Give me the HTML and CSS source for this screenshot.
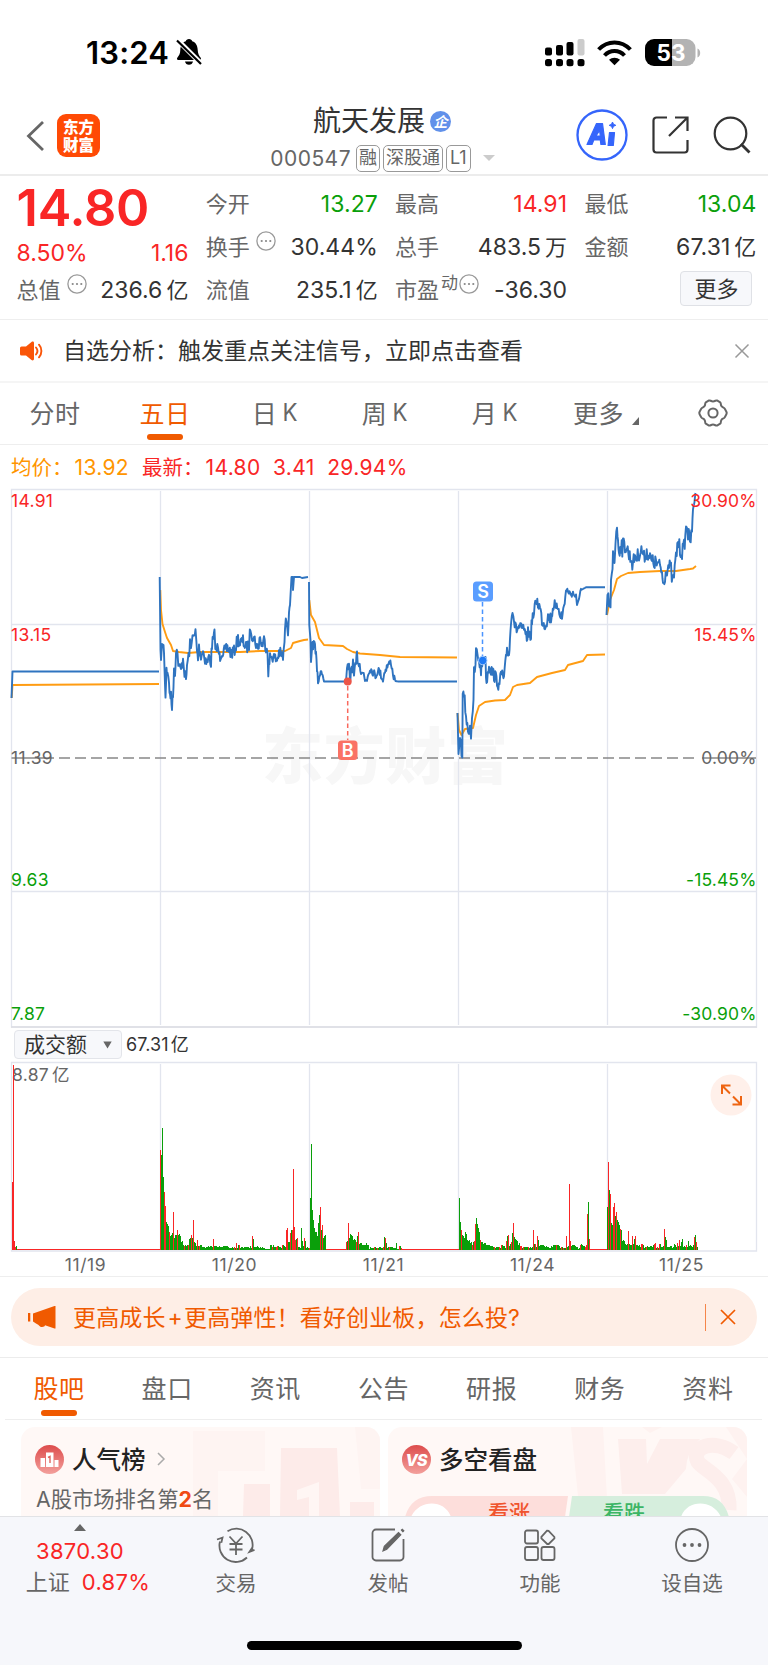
FILE: index.html
```html
<!DOCTYPE html>
<html lang="zh-CN">
<head>
<meta charset="utf-8">
<title>航天发展 000547</title>
<link rel="stylesheet" href="styles.css">
</head>
<body>
<div class="screen">
  <header class="status">
    <span class="time">13:24</span>
    <svg class="bell" width="26" height="28" viewBox="0 0 26 28"><path d="M13 1c1.800 0 2.800 1 3.200 2.200 4 1.300 5.300 4.800 5.500 8.800.2 4 1.300 5.600 3 7.700.6.800.2 2.300-1 2.300H2.300c-1.300 0-1.700-1.400-1-2.300 1.800-2.200 2.900-3.800 3-7.700.200-4 1.600-7.500 5.500-8.800C10.200 2 11.200 1 13 1zM9 23.500h8c-.3 2-2 3.300-4 3.300s-3.700-1.300-4-3.300z"/><path d="M1.500 2 25.500 26" stroke="#fff" stroke-width="5"/><path d="M1 2.500 25 26" stroke="#000" stroke-width="2.200"/></svg>
    <svg class="signal" width="160" height="30" viewBox="544 36 160 30">
      <g><rect x="545" y="46.500" width="7" height="8" rx="2"/><rect x="556" y="44" width="7" height="10.500" rx="2"/><rect x="566.500" y="41" width="7" height="13.500" rx="2"/><rect x="577.500" y="38" width="7" height="16.500" rx="2" fill="#ccc"/><rect x="545" y="58" width="7" height="7.200" rx="2.500"/><rect x="556" y="58" width="7" height="7.200" rx="2.500"/><rect x="566.500" y="58" width="7" height="7.200" rx="2.500"/><rect x="577.500" y="58" width="7" height="7.200" rx="2.500"/></g>
      <path d="M598.600 48.500C607.500 39 621.500 39 630.400 48.500M604.500 54.500C610 48.600 619 48.600 624.500 54.500" fill="none" stroke="#000" stroke-width="4"/><path d="M609 58.700C612 56 617 56 620 58.700L614.500 64.200z"/>
      <path d="M672 38h14.500a9 9 0 0 1 9 9v9a9 9 0 0 1-9 9H672z" fill="#b3b3b3"/><path d="M672 38h-18a9 9 0 0 0-9 9v9a9 9 0 0 0 9 9h18z"/><path d="M697.500 47.500c3.600 1.500 3.600 7.500 0 9z" fill="#b3b3b3"/>
      <text x="671" y="60" text-anchor="middle" class="batt">53</text>
    </svg>
  </header>

  <nav class="nav">
    <div class="nav-side">
      <svg width="20" height="34" viewBox="0 0 20 34"><path d="M18 3 3.500 17 18 31" fill="none" stroke="#666" stroke-width="2.800"/></svg>
      <div class="brand"><span>东方</span><span>财富</span></div>
    </div>
    <div class="title">
      <div class="name">航天发展<span class="ent">企</span></div>
      <div class="code"><span class="num">000547</span><i class="tag">融</i><i class="tag">深股通</i><i class="tag">L1</i><svg width="12" height="8" viewBox="0 0 12 8"><path d="M0 1h12L6 7z" fill="#ccc"/></svg></div>
    </div>
    <div class="nav-side right">
      <svg width="52" height="52" viewBox="0 0 52 52"><circle cx="26" cy="26" r="24.500" fill="none" stroke="#3565fb" stroke-width="2.300"/><path d="M20.500 14.500h6l2.800 21h-4.400l-.6-4.500h-6.500l-1.800 4.500h-5zM20 27h4.300l-.7-5.500zM33.500 23.500h5l-1.200 13h-5.200z" fill="#3565fb" stroke="#3565fb" stroke-width="1.200" stroke-linejoin="round"/><path d="m36.500 13 1 2.300 2.300 1-2.300 1-1 2.300-1-2.300-2.300-1 2.300-1z" fill="#3565fb" stroke="#3565fb"/></svg>
      <svg width="37" height="38" viewBox="0 0 37 38"><path d="M15 1.500H4.500a3 3 0 0 0-3 3v29a3 3 0 0 0 3 3h28a3 3 0 0 0 3-3V24M23 1.500h12.500V15M35 2 17 20" fill="none" stroke="#333" stroke-width="2.200"/></svg>
      <svg width="38" height="38" viewBox="0 0 38 38"><circle cx="17.500" cy="17.500" r="15.800" fill="none" stroke="#333" stroke-width="2.200"/><path d="m28 28 8.500 8.500" stroke="#333" stroke-width="2.800"/></svg>
    </div>
  </nav>

  <section class="quote">
    <div class="col first">
      <div class="price">14.80</div>
      <div class="row red change"><span>8.50%</span><span>1.16</span></div>
      <div class="row"><label>总值<svg class="dots" viewBox="0 0 20 20"><use href="#dots"/></svg></label><b>236.6<u>亿</u></b></div>
    </div>
    <div class="col">
      <div class="row"><label>今开</label><b class="green">13.27</b></div>
      <div class="row"><label>换手<svg class="dots" viewBox="0 0 20 20"><use href="#dots"/></svg></label><b>30.44%</b></div>
      <div class="row"><label>流值</label><b>235.1<u>亿</u></b></div>
    </div>
    <div class="col">
      <div class="row"><label>最高</label><b class="red">14.91</b></div>
      <div class="row"><label>总手</label><b>483.5<u>万</u></b></div>
      <div class="row"><label>市盈<sup>动</sup><svg class="dots tight" viewBox="0 0 20 20"><g id="dots"><circle cx="10" cy="10" r="9.100" fill="none" stroke="#999" stroke-width="1.300"/><circle cx="5.700" cy="10" r="1.100" fill="#888"/><circle cx="10" cy="10" r="1.100" fill="#888"/><circle cx="14.300" cy="10" r="1.100" fill="#888"/></g></svg></label><b>-36.30</b></div>
    </div>
    <div class="col">
      <div class="row"><label>最低</label><b class="green">13.04</b></div>
      <div class="row"><label>金额</label><b>67.31<u>亿</u></b></div>
      <div class="row end"><button class="more">更多</button></div>
    </div>
  </section>

  <section class="notice">
    <svg width="24" height="20" viewBox="0 0 24 20"><path d="M1.500 5.500H6L11.500 1c1-.8 2.500-.3 2.500 1v16c0 1.300-1.500 1.800-2.500 1L6 14.500H1.500A1.500 1.500 0 0 1 0 13V7a1.500 1.500 0 0 1 1.500-1.500z" fill="#fa5508"/><path d="M16 6.500c1.700 2 1.700 5 0 7M19 3.700c3.200 3.500 3.200 9 0 12.600" fill="none" stroke="#fa5508" stroke-width="1.900" stroke-linecap="round"/></svg>
    <span>自选分析：触发重点关注信号，立即点击查看</span>
    <svg width="16" height="16" viewBox="0 0 16 16"><path d="m1.500 1.500 13 13m0-13-13 13" stroke="#999" stroke-width="1.500"/></svg>
  </section>

  <section class="tabs period">
    <span>分时</span><span class="on">五日</span><span>日<em>K</em></span><span>周<em>K</em></span><span>月<em>K</em></span><span class="wide">更多<svg width="7" height="8" viewBox="0 0 7 8"><path d="M7 0v8H0z" fill="#666"/></svg></span>
    <span><svg width="30" height="30" viewBox="0 0 30 30" fill="none" stroke="#666" stroke-width="2"><path d="M11 2.500c1-.5 2 .9 4 .9s3-1.400 4-.9l3.200 1.900c1 .7.200 2 1.200 3.700s2.800 1.400 3.300 2.500c.5 1.200 2 3.200 2 4.400s-1.500 3.200-2 4.400c-.5 1.100-2.300.8-3.300 2.500s-.2 3-1.200 3.700L19 27.500c-1 .5-2-.9-4-.9s-3 1.400-4 .9l-3.200-1.900c-1-.7-.2-2-1.200-3.700s-2.800-1.400-3.300-2.500c-.5-1.200-2-3.200-2-4.400s1.500-3.200 2-4.400c.5-1.100 2.300-.8 3.300-2.500s.2-3 1.200-3.700z"/><circle cx="15" cy="15" r="4.600"/></svg></span>
  </section>

  <section class="legend"><span class="orange">均价：<b>13.92</b></span><span class="red">最新：<b>14.80</b><b>3.41</b><b>29.94%</b></span></section>

  <svg class="chart" width="768" height="540" viewBox="0 488 768 540">
    <text x="262" y="779" class="mark" textLength="246">东方财富</text>
    <g class="grid"><path d="M160.500 491v534M309.500 491v534M458.500 491v534M607.500 491v534M11.500 624.500h745M11.500 891.500h745"/><path d="M11.500 489.500h745v537.500h-745z"/><path d="M11 1027h746" class="strong"/></g>
    <path class="dash" d="M59 758H698"/><path class="dash0" d="M11.500 758H54M702 758h54"/>
    <g id="avg" class="avg"></g><g id="last" class="last"></g>
    <path d="M482.500 602V656" class="sell"/><circle cx="482.700" cy="660.500" r="4.200" fill="#1f7af5" stroke="#a5cbff"/><rect x="473" y="581.500" width="20" height="20" rx="3.500" fill="#5a9dff"/><text x="483" y="598" class="bs">S</text>
    <path d="M347.700 686V740" class="buy"/><circle cx="347.700" cy="681.500" r="4" fill="#ec5548"/><rect x="338" y="740.500" width="19.500" height="19.500" rx="3.500" fill="#fa7265"/><text x="347.800" y="757" class="bs">B</text>
    <g class="axis">
      <text x="11" y="507" class="r">14.91</text><text x="11" y="641" class="r">13.15</text><text x="11" y="763.500" class="n">11.39</text><text x="11" y="886" class="g">9.63</text><text x="11" y="1020" class="g">7.87</text>
      <text x="756.500" y="507" class="r e">30.90%</text><text x="756.500" y="641" class="r e">15.45%</text><text x="756.500" y="763.500" class="n e">0.00%</text><text x="756.500" y="886" class="g e">-15.45%</text><text x="756.500" y="1020" class="g e">-30.90%</text>
    </g>
  </svg>

  <section class="indicator"><button>成交额<svg width="9" height="8" viewBox="0 0 9 8"><path d="M.3.500h8.400L4.500 7.500z" fill="#666"/></svg></button><span>67.31<u>亿</u></span></section>

  <svg class="volume" width="768" height="192" viewBox="0 1061 768 192">
    <g class="grid"><path d="M160.500 1064v186M309.500 1064v186M458.500 1064v186M607.500 1064v186"/><path d="M11.500 1062.500h745V1251h-745z"/></g>
    <text x="12" y="1081" class="vmax">8.87<tspan dx="3">亿</tspan></text>
    <g id="vol" shape-rendering="crispEdges"></g>
    <circle cx="731" cy="1095" r="20.500" fill="#fff0ea"/><path d="M722 1094v-8.500h8.500M722 1085.500l8 8M732.500 1104.500h8.500V1096M741 1104.500l-8-8" fill="none" stroke="#ee6412" stroke-width="2"/>
  </svg>
  <section class="dates"><span>11/19</span><span>11/20</span><span>11/21</span><span>11/24</span><span>11/25</span></section>

  <section class="promo-wrap"><div class="promo">
    <svg width="28" height="24" viewBox="0 0 28 24" fill="#f05a00"><path d="M0 8h2.300v8.500H0zM5 8.500 26.500 1h1v22.500h-1L17 20.300c0 1.500-3.500 2.600-5.200.9l-1.600-1.500L8 18.500 5 16.500z"/></svg>
    <span>更高成长<em>+</em>更高弹性！看好创业板，怎么投?</span><i></i>
    <svg width="16" height="16" viewBox="0 0 16 16"><path d="m1 1 14 14m0-14L1 15" stroke="#f05a00" stroke-width="1.700"/></svg>
  </div></section>

  <section class="tabs info"><span class="on">股吧</span><span>盘口</span><span>资讯</span><span>公告</span><span>研报</span><span>财务</span><span>资料</span></section>

  <section class="cards">
    <div class="card">
      <svg class="art" width="359" height="89" viewBox="0 0 359 89"><path d="M172 4h72v40h-47v45h-25zM334 0h25v62h-19z" fill="#fef4f2"/><path d="M223 57h26v32h-27zM260 21h56l3 68h-60zM329 75h24v14h-24z" fill="#fdebe9"/><path d="M276 63l22-8v34h-10V70l-12 3z" fill="#fff6f4"/></svg>
      <div class="head"><svg width="29" height="29" viewBox="0 0 29 29"><defs><linearGradient id="badge" x2="0" y2="1"><stop stop-color="#dd4c4c"/><stop offset="1" stop-color="#f3a09c"/></linearGradient></defs><circle cx="14.500" cy="14.500" r="14.500" fill="url(#badge)"/><path d="M5.500 13H10v9H5.500zM11 7.500h7.500V22H11zM19.500 15h4v7h-4z" fill="#fff"/><path d="m13 12.500 2-1V18" fill="none" stroke="#df6660" stroke-width="1.400"/></svg><strong>人气榜</strong><svg width="9" height="14" viewBox="0 0 9 14"><path d="m1 1 6 6-6 6" fill="none" stroke="#aaa" stroke-width="1.500"/></svg></div>
      <p>A股市场排名第<b>2</b>名</p>
    </div>
    <div class="card">
      <svg class="art" width="359" height="89" viewBox="0 0 359 89"><path d="M183 0h32l5 89h-28zM254 0h20l-12 6zM338 0h21v70l-15-18 15-20z" fill="#fef2f0"/><path d="M230 12h28l1 25 13-25h40q-14 14-14 30l-21 25h-43z" fill="#fdeeec"/><path d="M346 26c-20-15-44-6-36 9 5 8 33 16 31 48" fill="none" stroke="#fdeeec" stroke-width="15"/></svg>
      <div class="head"><svg width="29" height="29" viewBox="0 0 29 29"><circle cx="14.500" cy="14.500" r="14.500" fill="url(#badge)"/><text x="14" y="20.500" class="vs">VS</text></svg><strong>多空看盘</strong></div>
      <svg class="vote" width="326" height="22" viewBox="0 0 326 22"><path d="M1 22C5 8 14 1 28 1h136l-3 21z" fill="#fddedb"/><path d="M168 1h131c14 0 22 7 26 21H165z" fill="#d6eedd"/><path d="M7 22C15 4 41 4 47 22M277 22c6-18 32-18 40 0" fill="#fff"/><text x="84" y="25" fill="#f0542d">看涨</text><text x="199" y="25" fill="#3cb565">看跌</text></svg>
    </div>
  </section>

  <footer class="bottom">
    <div class="index"><svg width="12" height="7" viewBox="0 0 12 7"><path d="m6 0 6 7H0z" fill="#666"/></svg><b class="red">3870.30</b><div>上证<b class="red">0.87%</b></div></div>
    <div class="item"><svg width="40" height="36" viewBox="0 0 40 36"><path d="M11.500 4.300A16.300 16.300 0 0 1 36 22.500M4 14.500A16.300 16.300 0 0 0 31 30.500M1 12.500l5.500-1.800-1.200 5M38.500 22.800l-5 2 2.700-4M13.500 9.500 20 16.500l6.500-7M13.500 17h13M13.500 22.500h13M20 17v11"/></svg><span>交易</span></div>
    <div class="item"><svg width="36" height="36" viewBox="0 0 36 36"><path d="M25 2.500H6A3.500 3.500 0 0 0 2.500 6v24A3.500 3.500 0 0 0 6 33.500h24a3.500 3.500 0 0 0 3.500-3.500V12"/><path d="m13 24 1.300-4.700L28.500 5.500l2.300 2.300-14 14.500zM31 3.500 32.300 2.300l1.500 1.500L32.500 5.200" fill="#666" stroke-width="1.200"/></svg><span>发帖</span></div>
    <div class="item"><svg width="36" height="36" viewBox="0 0 36 36"><rect x="3" y="3.500" width="13" height="13" rx="2"/><rect x="3" y="20" width="13" height="13" rx="2"/><rect x="19.500" y="20" width="13" height="13" rx="2"/><path d="m25 3.700 1.600.1 5.800 6.200v1.400L26.700 17h-1.500l-5.800-5.700V9.900z"/></svg><span>功能</span></div>
    <div class="item"><svg width="36" height="36" viewBox="0 0 36 36"><circle cx="18" cy="18" r="16"/><g fill="#666" stroke="none"><circle cx="10.500" cy="18" r="1.900"/><circle cx="18" cy="18" r="1.900"/><circle cx="25.500" cy="18" r="1.900"/></g></svg><span>设自选</span></div>
    <i class="home"></i>
  </footer>
</div>
<script src="charts.js"></script>
</body>
</html>
```
FILE: styles.css
```css
* { box-sizing: border-box; }
body { margin: 0; background: #fff; color: #333; font-family: Inter, "Noto Sans CJK SC", sans-serif; }
.screen { width: 768px; height: 1665px; overflow: hidden; display: flex; flex-direction: column; }
.screen > * { flex: none; }
b, i, em, u { font-weight: inherit; font-style: normal; text-decoration: none; }
button { font: inherit; color: inherit; padding: 0; }
.red { color: #f92626 !important; }
.green { color: #0a9f0a !important; }
.orange { color: #ff9500; }

.status { height: 104px; display: flex; align-items: center; padding: 0 64px 0 86px; }
.time { font-size: 31px; font-weight: 600; letter-spacing: .2px; color: #000; }
.bell { margin-left: 7px; }
.signal { margin-left: auto; }
.batt { font: 700 22.500px Inter; fill: #fff; }

.nav { height: 72px; display: grid; grid-template-columns: 1fr 240px 1fr; border-bottom: 2px solid #ececec; padding: 0 17px 0 25px; }
.nav-side { display: flex; align-items: center; gap: 12px; padding-bottom: 11px; }
.nav-side.right { justify-content: flex-end; gap: 24px; padding-bottom: 12px; }
.brand { width: 43px; height: 43px; border-radius: 9px; background: #ff4a05; color: #fff; display: flex; flex-direction: column; align-items: center; justify-content: center; font: 900 15.500px/17.500px "Noto Sans CJK SC", sans-serif; }
.title { display: flex; flex-direction: column; align-items: center; white-space: nowrap; padding-right: 12px; }
.name { font-size: 28px; line-height: 34px; display: flex; align-items: center; gap: 5px; }
.ent { width: 21px; height: 21px; border-radius: 50%; background: #6191ea; color: #fff; font: italic 700 14px/20px "Noto Sans CJK SC"; text-align: center; }
.code { display: flex; align-items: center; gap: 3px; height: 40px; color: #666; font-size: 20px; margin-left: 1px; }
.num { font-size: 21px; letter-spacing: .45px; margin-right: 2px; }
.tag { border: 1.500px solid #999; border-radius: 5px; height: 27px; line-height: 24px; padding: 0 2px; font-size: 18px; }
.tag:nth-of-type(3) { padding: 0 3px; }
.code svg { margin-left: 9px; }

.quote { height: 144px; display: grid; grid-template-columns: repeat(4, 172px); column-gap: 17.300px; padding: 6px 12px 0 16.500px; border-bottom: 1px solid #eee; }
.row { height: 43px; display: flex; justify-content: space-between; align-items: center; font-size: 23px; white-space: nowrap; }
.row label { color: #666; font-size: 22px; display: flex; align-items: center; padding-bottom: 4px; }
.row b { line-height: 28px; letter-spacing: .05px; }
.row u { font-size: 22px; line-height: 0; margin-left: 4px; }
.end { justify-content: flex-end; }
.dots { width: 20px; height: 20px; margin: -7px 0 0 6px; }
.dots.tight { margin-left: 1px; }
sup { font-size: 17px; margin: -10px 0 0 2px; line-height: 18px; }
.price { font-size: 50.500px; line-height: 49px; height: 49px; font-weight: 600; color: #f92626; letter-spacing: -.2px; padding-top: 1px; }
.change { height: 37px; padding-top: 7px; }
.more { width: 72px; height: 35px; margin: 0 4px 2px 0; border: 1px solid #dfe1e6; border-radius: 4px; background: #f7f8fb; font-size: 22px; line-height: 30px; }

.notice { height: 63px; border-bottom: 2px solid #f5f5f5; display: flex; align-items: center; padding: 0 18px 0 20px; font-size: 23px; }
.notice span { margin-left: 19px; flex: 1; padding-bottom: 3px; }

.tabs { display: flex; color: #666; font-size: 25px; letter-spacing: .6px; border-bottom: 1px solid #eee; }
.tabs span { display: flex; align-items: center; justify-content: center; position: relative; padding-bottom: 4px; }
.tabs .on { color: #f05a00; }
.tabs .on::after { content: ""; position: absolute; bottom: 4px; left: calc(50% - 18px); width: 36px; height: 6px; border-radius: 3px; background: #f05a00; }
.tabs em { margin-left: 5px; font-size: 24px; padding-top: 2px; letter-spacing: 0; transform: scaleX(.93); }
.period { height: 62px; }
.period span { width: 110px; }
.period .wide { width: 112px; }
.period .wide svg { margin: 19px 0 0 8px; }
.period span:last-child { width: 102px; padding-bottom: 1px; }

.legend { height: 43px; display: flex; align-items: center; gap: 13px; padding: 0 11px 2px; font-size: 20.500px; }
.legend b { font-size: 21px; letter-spacing: .35px; margin: 0 12.500px 0 2px; }
.legend .orange b { margin-right: 0; }
.legend .red b + b { margin-left: 0; }

.chart, .volume { display: block; }
.mark { font: 900 61px "Noto Sans CJK SC"; fill: #f7f7f7; }
.grid { fill: none; stroke: #e2e5ee; stroke-width: 1.300; }
.grid .strong { stroke: #dcdee3; }
.dash, .dash0 { stroke: #888; stroke-width: 1.500; fill: none; }
.dash { stroke-dasharray: 11 5; }
.avg, .last { fill: none; stroke-width: 1.900; stroke-linejoin: round; }
.avg { stroke: #ff9c12; }
.last { stroke: #2f74c0; }
.sell, .buy { stroke-width: 1.500; stroke-dasharray: 4.500 3; stroke: #4a94ff; }
.buy { stroke: #f9695d; }
.bs { font: 600 18px Inter; fill: #fff; text-anchor: middle; }
.axis text { font: 17.500px Inter; letter-spacing: .3px; }
.axis .r { fill: #f92626; }
.axis .g { fill: #0a9f0a; }
.axis .n { fill: #666; }
.axis .e { text-anchor: end; letter-spacing: .15px; }
.indicator { height: 33px; display: flex; align-items: center; gap: 4px; padding-left: 14px; font-size: 18px; }
.indicator button { width: 108px; height: 29px; border: 1.500px solid #e3e5ea; border-radius: 4px; background: #f7f8fb; display: flex; align-items: center; justify-content: space-between; padding: 0 9px; font-size: 21px; line-height: 24px; }
.indicator span { line-height: 24px; letter-spacing: .1px; }
.indicator u { margin-left: 2px; line-height: 0; }
.vmax { font: 17.500px Inter, "Noto Sans CJK SC"; fill: #666; letter-spacing: .3px; }
.dates { height: 24px; border-bottom: 1.500px solid #eee; display: grid; grid-template-columns: repeat(5, 149px); padding-left: 11px; text-align: center; color: #666; font-size: 17.500px; line-height: 23px; letter-spacing: .6px; }

.promo-wrap { height: 81px; border-bottom: 1.500px solid #ececec; padding: 11px 11px 0; }
.promo { height: 58px; border-radius: 29px; background: #feeee6; color: #f05a00; display: flex; align-items: center; padding: 0 21px 0 17px; font-size: 23px; }
.promo span { margin-left: 17px; flex: 1; padding-bottom: 3px; letter-spacing: .15px; }
.promo em { margin: 0 1px 0 2px; }
.promo i { width: 1.500px; height: 27px; background: #f5854a; margin-right: 14px; }

.info { height: 62px; margin: 0 6px 0 5px; }
.info span { width: 108.200px; }
.info .on::after { bottom: 3px; }

.cards { height: 96px; padding: 7px 21px 0; display: flex; gap: 8px; overflow: hidden; }
.card { position: relative; width: 359px; height: 130px; border-radius: 14px; background: #fff8f6; padding: 17px 14px; overflow: hidden; flex: none; }
.art { position: absolute; left: 0; top: 0; }
.head { position: relative; display: flex; align-items: center; height: 30px; }
.head strong { font-size: 24.500px; font-weight: 500; color: #222; margin: 0 11px 0 8px; padding-bottom: 2px; }
.card p { position: relative; margin: 10px 0 0 1px; font-size: 21.300px; line-height: 30px; color: #666; }
.card p b { color: #f04a14; font-weight: 700; }
.vs { font: italic 800 16px Inter; fill: #fff; text-anchor: middle; letter-spacing: -1px; }
.vote { position: relative; display: block; margin: 21px 0 0 2px; }
.vote text { font: 500 21px "Noto Sans CJK SC"; }

.bottom { position: relative; height: 149px; background: #f6f7fb; border-top: 1.500px solid #e2e3e6; display: grid; grid-template-columns: 160px repeat(4, 152px); color: #666; font-size: 20.500px; }
.index { display: flex; flex-direction: column; align-items: center; padding-top: 7px; font-size: 22px; line-height: 31px; white-space: nowrap; }
.index b { letter-spacing: .3px; }
.index div { margin-left: 16px; }
.index div b { margin-left: 12px; }
.index > .red { margin-top: 5px; }
.item { display: flex; flex-direction: column; align-items: center; padding-top: 10px; gap: 4px; }
.item svg { fill: none; stroke: #666; stroke-width: 1.800; }
.home { position: absolute; left: 247px; bottom: 15px; width: 275px; height: 9px; border-radius: 5px; background: #000; }
```
FILE: charts.js
```js
// Small repeatable noise source for minute-by-minute movement.
let seed = 7;
const noise = () => { seed = (seed * 16807) % 2147483647; return seed / 2147483647 - 0.5; };
const NS = "http://www.w3.org/2000/svg";
const addPath = (id, d) => { const p = document.createElementNS(NS, "path"); p.setAttribute("d", d); document.getElementById(id).append(p); };
const pairs = s => s.trim().split(/\s+/).map(t => t.split(",").map(Number));

// Price per session; a third value switches the noise amplitude from there on.
const last = [
  "11.5,698,0 12.5,671.5 159,671.5",
  "159.7,577,0 160.5,650 161,660 162,644 163.5,645,5 164.5,665 165.5,697 166.5,666 167.5,676 169,680 170,700 171,692 172,706 173,697 174,666 175,675 176,648 177.5,655 179,668 181,670 183,658 184.5,672 186,682 187,665 188.5,657 190,645 191,650 192.5,630 194,640 195.5,632 197,652 198,660 199,648 201,655 203,651 205,658 207,663 209,657 211,662 212,645 214.5,635 216,650 218,648 219.5,657 222,651 225,652 228,648 231,653 234,652 236,645 238,639 240,643 243,641 246,648 249,645 250.5,626 252,634 254,638 256,643 258,650 259.5,637 262,645 264,640 266,646 267.5,648 268.3,671 270,658 272,655 274,658 277,660 279,652 281,655 283,657 284,650 285,630 286.5,618 288,630 289,610 290,605,0 291.5,577 293,577 293,590 294,577 300,577 302,578 308,577",
  "309,582,0 309.3,625 310.5,640 311,662 312.5,642,5 315,648 316,655 317,665 318,681,3 320,676 322,672 324,681.5,0 346,681.5 347,668,5 349,668 350,685 351,668 353,665 354,678 356,665 357,655 359,663 361,668 363,672 365,681 367,678,3 370,668 373,672 376,676 378,669 381,675 383,680 385,670 388,665 391,662 393,674 395,681,1 398,681.5,0 457,681.5",
  "457.5,713,0 458.5,754 460,738,5 461.5,750 462.3,755 462.7,698 464,695 466,715 468,734 470,725 471,735 472,715 473.5,705 474,673 475.5,668 476,647 477.5,658 479,660 481,670 484,655 485.5,662 486.5,683 489,663 491,670 494,675 497,680 499.5,688 501,672 504,680 506,660 507,648 509,655 510,640 511,618 512.5,607 514,620 516,630 519,627 522,630 524,628 525.5,640 528,633 531,635 532,618 534,615 536,600 538,603 540,608 542,620 545,625 548,617 551,618 554,603 556,612 558,605 560,612 562,618 564,605 566,592,3 568,590 570,594 573,593 576,597 577,608 579,596 581,590 586,587.3,0 605,587.3",
  "606.5,615,0 607.5,595,5 609,602 610.5,610 611,585 612.5,570 613,555 614.5,562 615.5,540 617,523 618,545 619,550,8 621,543 623,548 625,545,6 627,548 629,555 631,558 633,565 635,555 637,558 639,553 642,550 644,558 646,552 648,553 650,558 652,562 656,563 660,567 662,572 663,584 665,575 667,568 669,566 671,570 672.5,583 674,575 676,558 678,540 680,550 682,552 684,547 686,530 687,523 688,535 690,540 692,535 693,505 694.5,500 695.5,493,0"
];
for (const day of last) {
  const p = pairs(day); let d = "M" + p[0][0] + " " + p[0][1], amp = 0;
  for (let i = 1; i < p.length; i++) {
    const [x0, y0, a] = p[i - 1], [x1, y1] = p[i];
    if (a !== undefined) amp = a;
    const n = amp ? Math.max(1, Math.round((x1 - x0) / 0.62)) : 1;
    for (let k = 1; k <= n; k++) d += "L" + (x0 + (x1 - x0) * k / n).toFixed(1) + " " + (y0 + (y1 - y0) * k / n + noise() * amp * (i === p.length - 1 || p[i][2] === 0 ? 0 : 2.6)).toFixed(1);
  }
  addPath("last", d);
}
[
  "11.7,698 12.5,685 159,684",
  "160.3,590 161,610 162.5,624 165,632 167,638 171,645 173,651 179,652 188,653 200,652 240,652 260,651 285,651 291,648 293,643 300,641 304,640 308,639.5",
  "309.3,600 311,615 315,622 317,630 319,638 324,645 343,646 347,649 353,652 360,653.5 380,655 400,657 457,657.5",
  "457.5,713 459,730 461.5,735 465,729 473,728 476,715 479,706 485,702 495,700.5 505,700 510,695 513,687 517,685 530,683 537,677 552,673 565,670 568,665 583,661 587,655 605,654.5",
  "607,615 610,600 614,590 617,579 621,576 628,573 640,572 660,571 676,571 690,569 693,568.5 696,566"
].forEach(s => addPath("avg", "M" + s.replace(/ /g, "L")));

// Turnover bars: x, height, colour (1 = up, 0 = down); gaps ease between neighbours.
const vol = pairs("12,68,1 13,185,1 14,9,1 15,3,1 17,1,1 159,0.6,1 160,100,1 161,95,0 162,122,0 163,73,0 164,58,1 165,44,1 166,28,0 167,26,0 168,24,0 170,14,0 172,17,0 173,38,1 174,12,0 176,15,0 177,20,1 178,15,0 180,14,0 181,8,0 184,4,1 188,5,1 190,12,0 191,15,1 192,12,0 193,30,1 194,8,0 196,4,0 197,10,1 198,4,0 205,2,0 212,3,0 213,11,1 214,4,0 230,2,0 235,2,0 236,7,1 237,2,0 239,5,1 240,2,0 251,2,0 252,14,1 253,11,0 254,3,0 265,1,0 270,5,0 272,3,1 281,2,0 282,5,1 285,3,0 286,20,1 287,22,1 288,8,0 289,8,0 290,17,1 292,20,1 293,81,1 294,23,1 295,10,1 297,12,1 298,3,0 300,2,0 301,22,0 302,9,0 303,4,0 304,12,1 306,2,0 309,2,1 310,52,0 311,106,0 312,40,0 313,30,0 314,22,0 315,18,0 317,14,0 318,27,0 319,35,0 320,43,1 321,20,0 322,25,1 323,12,0 325,15,0 326,1,1 345,0.6,1 346,8,1 348,27,1 349,12,0 351,15,0 353,10,0 356,8,1 358,18,1 359,6,0 362,5,0 367,5,0 369,1.5,0 381,2,0 384,13,0 385,12,1 387,2,0 395,2,0 396,7,0 397,1,0 399,4,1 402,0.6,1 458,0.6,1 459,52,0 460,28,0 461,20,1 462,15,0 464,12,0 465,18,0 467,10,0 470,7,0 472,5,1 474,9,1 475,26,1 476,32,0 477,26,0 479,18,0 480,10,1 483,6,0 490,4,0 495,2,0 500,2,0 501,5,1 505,2,0 506,9,1 508,15,1 509,4,0 511,8,1 512,17,0 513,27,1 514,13,0 516,10,0 518,5,0 522,2,0 531,2,0 533,20,1 534,6,0 536,3,0 537,14,1 539,4,0 550,2,0 556,5,1 560,2,0 565,2,0 566,14,1 567,3,0 569,66,1 570,9,1 571,4,0 578,1.5,0 580,5,1 583,4,0 585,3,1 586,5,1 587,36,1 588,48,0 589,11,1 590,1,1 606,0.6,1 607,43,0 608,88,1 609,60,0 610,56,1 611,27,0 612,25,0 613,43,1 614,47,1 615,34,0 616,38,1 617,30,0 618,28,0 619,25,0 620,21,1 621,20,0 622,9,0 626,5,0 628,19,1 629,6,0 631,5,0 632,14,1 633,6,0 635,14,1 636,5,0 640,3,0 642,6,1 644,2,0 652,3,0 655,7,1 656,2,0 659,6,1 661,3,0 664,21,1 665,13,0 667,3,0 672,2,0 674,6,0 676,3,0 677,7,1 678,4,0 679,10,1 680,4,0 682,11,0 683,3,0 688,9,0 689,4,0 692,3,0 694,13,1 695,15,0 696,8,1 697,3,0");
const colors = ["", ""];
for (let i = 0; i < vol.length; i++) {
  const [x, h, c] = vol[i], next = vol[i + 1] || [x + 1, h, c];
  for (let k = x; k < next[0]; k++) {
    const t = (k - x) / (next[0] - x), base = h + (next[1] < h * 3 ? (next[1] - h) * t : 0);
    const hh = k === x ? h : Math.max(0.8, base + noise() * Math.min(3, base * 0.7) + (h > 1.2 ? 0.9 : 0));
    const cc = k === x || h < 1.1 ? c : (noise() > 0.38 ? 1 : 0);
    colors[cc] += `M${k} 1250V${(1250 - Math.max(hh, 0.9)).toFixed(1)}h1V1250z`;
  }
}
addPath("vol", colors[0]); addPath("vol", colors[1]);
document.querySelectorAll("#vol path").forEach((p, i) => p.setAttribute("fill", i ? "#f92626" : "#0a9f0a"));
```
